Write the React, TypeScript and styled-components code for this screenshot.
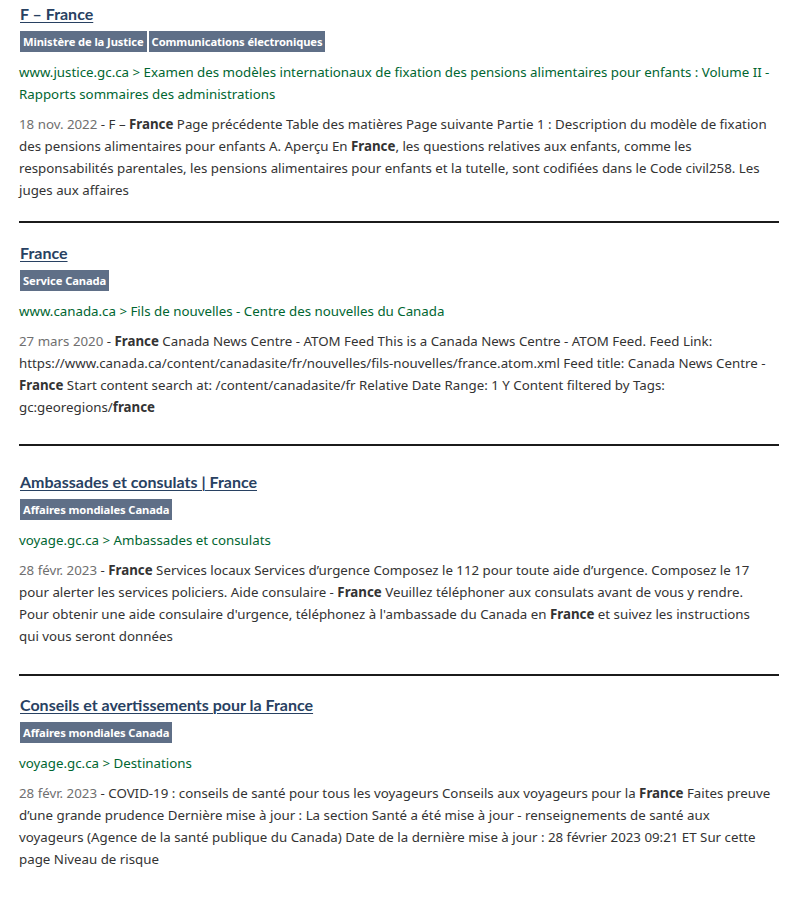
import React from "react";
import styled, { createGlobalStyle } from "styled-components";

const Global = createGlobalStyle`
  html, body { margin: 0; padding: 0; background: #ffffff; }
  body { font-family: "Noto Sans", "Open Sans", sans-serif; color: #333333; }
`;

const Page = styled.main`
  padding: 0 26px 0 19px;
  display: flex;
  flex-direction: column;
`;

const Result = styled.section<{ $top: number; $bottom: number; $last?: boolean }>`
  display: flex;
  flex-direction: column;
  align-items: flex-start;
  padding-top: ${(p) => p.$top}px;
  padding-bottom: ${(p) => p.$bottom}px;
  border-bottom: ${(p) => (p.$last ? "none" : "2px solid #1b1b1b")};
`;

const Title = styled.a`
  font-family: Lato, "Noto Sans", sans-serif;
  font-weight: 700;
  font-size: 16px;
  line-height: 22px;
  color: #284162;
  text-decoration: underline;
  text-underline-offset: 2px;
  text-decoration-thickness: 1px;
  margin: 0 0 0 1px;
`;

const Badges = styled.div`
  display: flex;
  gap: 2px;
  margin-top: 6px;
  margin-left: 1px;
`;

const Badge = styled.span`
  display: inline-flex;
  align-items: center;
  height: 21px;
  padding: 0 3px 0 3px;
  background: #5f6f87;
  color: #ffffff;
  font-family: "Noto Sans", sans-serif;
  font-weight: 700;
  font-size: 11.2px;
  letter-spacing: -0.1px;
`;

const Crumb = styled.p`
  margin: 9px 7px 0 0;
  font-size: 13.3px;
  line-height: 22px;
  color: #006631;
`;

const Desc = styled.p`
  margin: 8px 7px 0 0;
  font-size: 13.3px;
  line-height: 22px;
  color: #333333;
  b { font-weight: 700; color: #333333; }
`;

const DateText = styled.span`
  color: #6f6f6f;
`;

type Item = {
  title: string;
  badges: string[];
  crumb: string;
  date: string;
  body: React.ReactNode;
  top: number;
  bottom: number;
};

const items: Item[] = [
  {
    title: "F – France",
    badges: ["Ministère de la Justice", "Communications électroniques"],
    crumb:
      "www.justice.gc.ca > Examen des modèles internationaux de fixation des pensions alimentaires pour enfants : Volume II - Rapports sommaires des administrations",
    date: "18 nov. 2022",
    body: (
      <>
        F – <b>France</b> Page précédente Table des matières Page suivante Partie 1 : Description du modèle de fixation des pensions alimentaires pour enfants A. Aperçu En <b>France</b>, les questions relatives aux enfants, comme les responsabilités parentales, les pensions alimentaires pour enfants et la tutelle, sont codifiées dans le Code civil258. Les juges aux affaires
      </>
    ),
    top: 3,
    bottom: 20,
  },
  {
    title: "France",
    badges: ["Service Canada"],
    crumb: "www.canada.ca > Fils de nouvelles - Centre des nouvelles du Canada",
    date: "27 mars 2020",
    body: (
      <>
        <b>France</b> Canada News Centre - ATOM Feed This is a Canada News Centre - ATOM Feed. Feed Link: https://www.canada.ca/content/canadasite/fr/nouvelles/fils-nouvelles/france.atom.xml Feed title: Canada News Centre - <b>France</b> Start content search at: /content/canadasite/fr Relative Date Range: 1 Y Content filtered by Tags: gc:georegions/<b>france</b>
      </>
    ),
    top: 19,
    bottom: 26,
  },
  {
    title: "Ambassades et consulats | France",
    badges: ["Affaires mondiales Canada"],
    crumb: "voyage.gc.ca > Ambassades et consulats",
    date: "28 févr. 2023",
    body: (
      <>
        <b>France</b> Services locaux Services d’urgence Composez le 112 pour toute aide d’urgence. Composez le 17 pour alerter les services policiers. Aide consulaire - <b>France</b> Veuillez téléphoner aux consulats avant de vous y rendre. Pour obtenir une aide consulaire d'urgence, téléphonez à l'ambassade du Canada en <b>France</b> et suivez les instructions qui vous seront données
      </>
    ),
    top: 25,
    bottom: 27,
  },
  {
    title: "Conseils et avertissements pour la France",
    badges: ["Affaires mondiales Canada"],
    crumb: "voyage.gc.ca > Destinations",
    date: "28 févr. 2023",
    body: (
      <>
        COVID-19 : conseils de santé pour tous les voyageurs Conseils aux voyageurs pour la <b>France</b> Faites preuve d’une grande prudence Dernière mise à jour : La section Santé a été mise à jour - renseignements de santé aux voyageurs (Agence de la santé publique du Canada) Date de la dernière mise à jour : 28 février 2023 09:21 ET Sur cette page Niveau de risque
      </>
    ),
    top: 18,
    bottom: 20,
  },
];

export default function App() {
  return (
    <>
      <Global />
      <Page>
        {items.map((it, i) => (
          <Result key={i} $top={it.top} $bottom={it.bottom} $last={i === items.length - 1}>
            <Title href="#">{it.title}</Title>
            <Badges>
              {it.badges.map((b) => (
                <Badge key={b}>{b}</Badge>
              ))}
            </Badges>
            <Crumb>{it.crumb}</Crumb>
            <Desc>
              <DateText>{it.date}</DateText> - {it.body}
            </Desc>
          </Result>
        ))}
      </Page>
    </>
  );
}
